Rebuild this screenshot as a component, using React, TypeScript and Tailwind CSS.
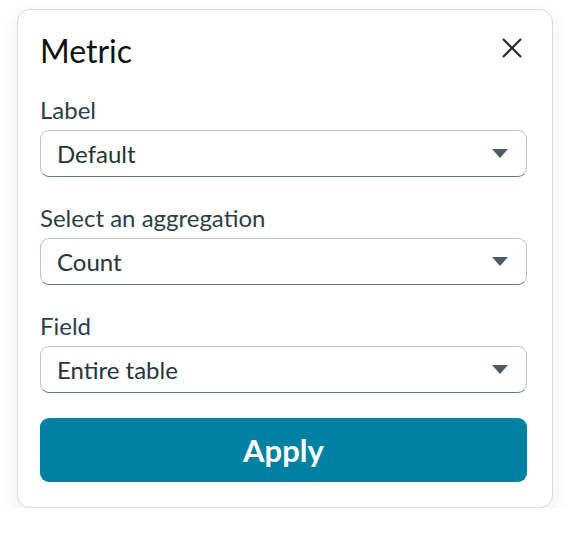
import React from "react";

const fields = [
  { label: "Label", value: "Default" },
  { label: "Select an aggregation", value: "Count" },
  { label: "Field", value: "Entire table" },
];

function SelectBox({ value }: { value: string }) {
  return (
    <div className="flex h-[47px] items-center justify-between rounded-[9px] border border-[#b9c5cb] border-b-[#67777f] bg-white pl-4 pr-[18px]">
      <span className="text-[24px] leading-7 text-[#26343c]">{value}</span>
      <svg width="16" height="9" viewBox="0 0 16 9">
        <path d="M0 0h16L8 9z" fill="#4d5c63" />
      </svg>
    </div>
  );
}

export default function App() {
  return (
    <div
      className="flex justify-center pt-[9px]"
      style={{ fontFamily: "Lato, 'Noto Sans', sans-serif" }}
    >
      <div className="w-[536px] rounded-[13px] border border-[#d5dde1] bg-white pl-[22px] pr-[25px] pt-[23px] pb-[25px] shadow-[0_8px_20px_rgba(0,0,0,0.08)]">
        <div className="flex items-start justify-between">
          <h2 className="text-[32px] leading-9 text-[#111]">Metric</h2>
          <button className="mt-[5px] mr-[5px]">
            <svg width="20" height="20" viewBox="0 0 20 20">
              <path
                d="M1 1L19 19M19 1L1 19"
                stroke="#1f2326"
                strokeWidth="2"
                fill="none"
              />
            </svg>
          </button>
        </div>

        <div className="mt-[27px] flex flex-col gap-[27px]">
          {fields.map((f) => (
            <div key={f.label}>
              <div className="mb-[6px] text-[24px] leading-7 text-[#2d3e47]">
                {f.label}
              </div>
              <SelectBox value={f.value} />
            </div>
          ))}
        </div>

        <button className="mt-[25px] flex h-16 w-full items-center justify-center rounded-[9px] bg-[#0081a3] text-[31px] font-bold text-white">
          Apply
        </button>
      </div>
    </div>
  );
}
